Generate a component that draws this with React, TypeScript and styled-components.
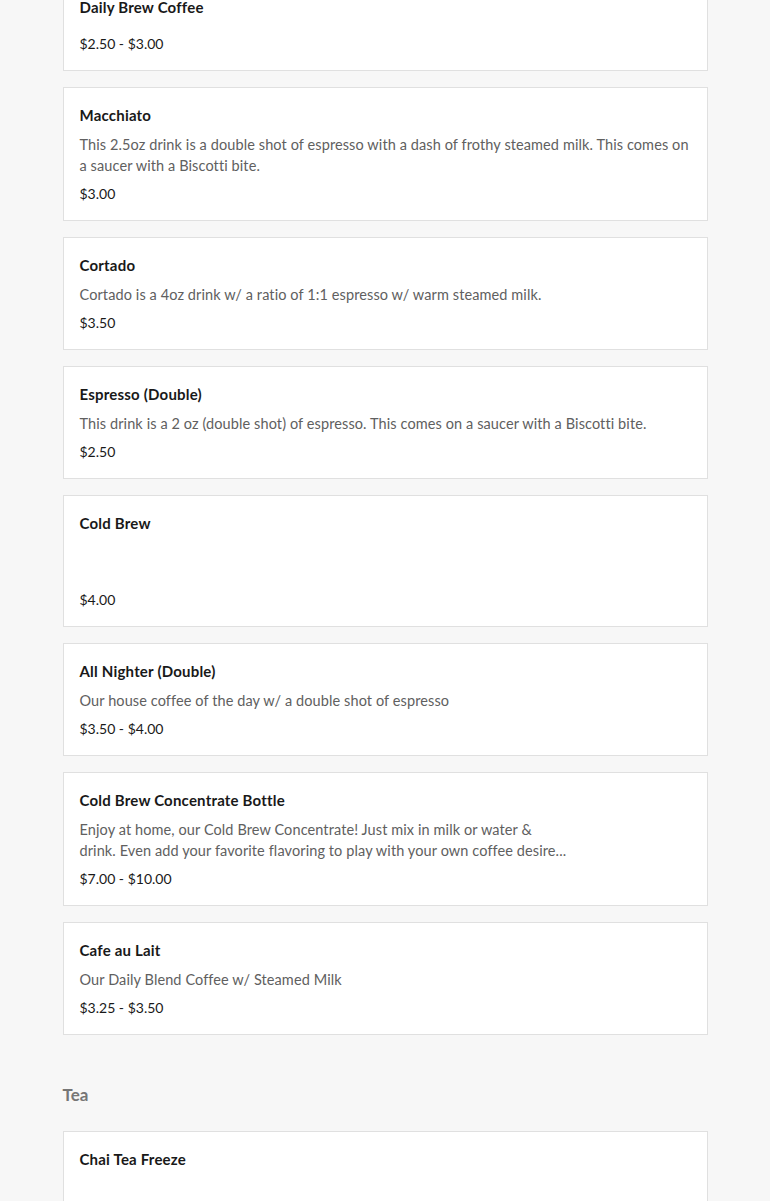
import React from 'react'
import styled, { createGlobalStyle } from 'styled-components'

const GlobalStyle = createGlobalStyle`
  html, body {
    margin: 0;
    padding: 0;
    background: #f7f7f7;
  }
  body {
    font-family: Lato, 'Liberation Sans', sans-serif;
    -webkit-font-smoothing: antialiased;
  }
`

const Page = styled.div`
  width: 645px;
  margin: -21px auto 0;
  display: flex;
  flex-direction: column;
`

const Section = styled.section`
  display: flex;
  flex-direction: column;
  gap: 16px;
`

const SectionTitle = styled.h2`
  margin: 48px 0 24px;
  font-size: 17px;
  line-height: 24px;
  font-weight: 700;
  color: #767676;
`

const Card = styled.div`
  background: #fff;
  border: 1px solid #e0e0e0;
  padding: 17px 16px 16px;
  display: flex;
  flex-direction: column;
`

const Name = styled.div`
  font-size: 15px;
  line-height: 20px;
  font-weight: 700;
  letter-spacing: 0.2px;
  color: #191919;
`

const Description = styled.div<{ $minHeight?: number }>`
  margin-top: 9px;
  font-size: 14.5px;
  line-height: 21px;
  letter-spacing: 0.1px;
  color: #606060;
  white-space: pre-line;
  min-height: ${p => p.$minHeight || 0}px;
`

const Price = styled.div`
  margin-top: 8px;
  font-size: 14px;
  line-height: 20px;
  color: #191919;
`

type Item = {
  name: string
  description: string
  minHeight?: number
  price: string
}

const coffee: Item[] = [
  { name: 'Daily Brew Coffee', description: '', price: '$2.50 - $3.00' },
  {
    name: 'Macchiato',
    description:
      'This 2.5oz drink is a double shot of espresso with a dash of frothy steamed milk. This comes on\na saucer with a Biscotti bite.',
    price: '$3.00',
  },
  {
    name: 'Cortado',
    description: 'Cortado is a 4oz drink w/ a ratio of 1:1 espresso w/ warm steamed milk.',
    price: '$3.50',
  },
  {
    name: 'Espresso (Double)',
    description: 'This drink is a 2 oz (double shot) of espresso. This comes on a saucer with a Biscotti bite.',
    price: '$2.50',
  },
  { name: 'Cold Brew', description: '', minHeight: 40, price: '$4.00' },
  {
    name: 'All Nighter (Double)',
    description: 'Our house coffee of the day w/ a double shot of espresso',
    price: '$3.50 - $4.00',
  },
  {
    name: 'Cold Brew Concentrate Bottle',
    description:
      'Enjoy at home, our Cold Brew Concentrate! Just mix in milk or water &\ndrink. Even add your favorite flavoring to play with your own coffee desire...',
    price: '$7.00 - $10.00',
  },
  {
    name: 'Cafe au Lait',
    description: 'Our Daily Blend Coffee w/ Steamed Milk',
    price: '$3.25 - $3.50',
  },
]

const tea: Item[] = [{ name: 'Chai Tea Freeze', description: '', minHeight: 40, price: '$4.50' }]

const MenuCard = ({ item }: { item: Item }) => (
  <Card>
    <Name>{item.name}</Name>
    <Description $minHeight={item.minHeight}>{item.description}</Description>
    <Price>{item.price}</Price>
  </Card>
)

const App = () => (
  <>
    <GlobalStyle />
    <Page>
      <Section>
        {coffee.map(item => (
          <MenuCard key={item.name} item={item} />
        ))}
      </Section>
      <SectionTitle>Tea</SectionTitle>
      <Section>
        {tea.map(item => (
          <MenuCard key={item.name} item={item} />
        ))}
      </Section>
    </Page>
  </>
)

export default App
